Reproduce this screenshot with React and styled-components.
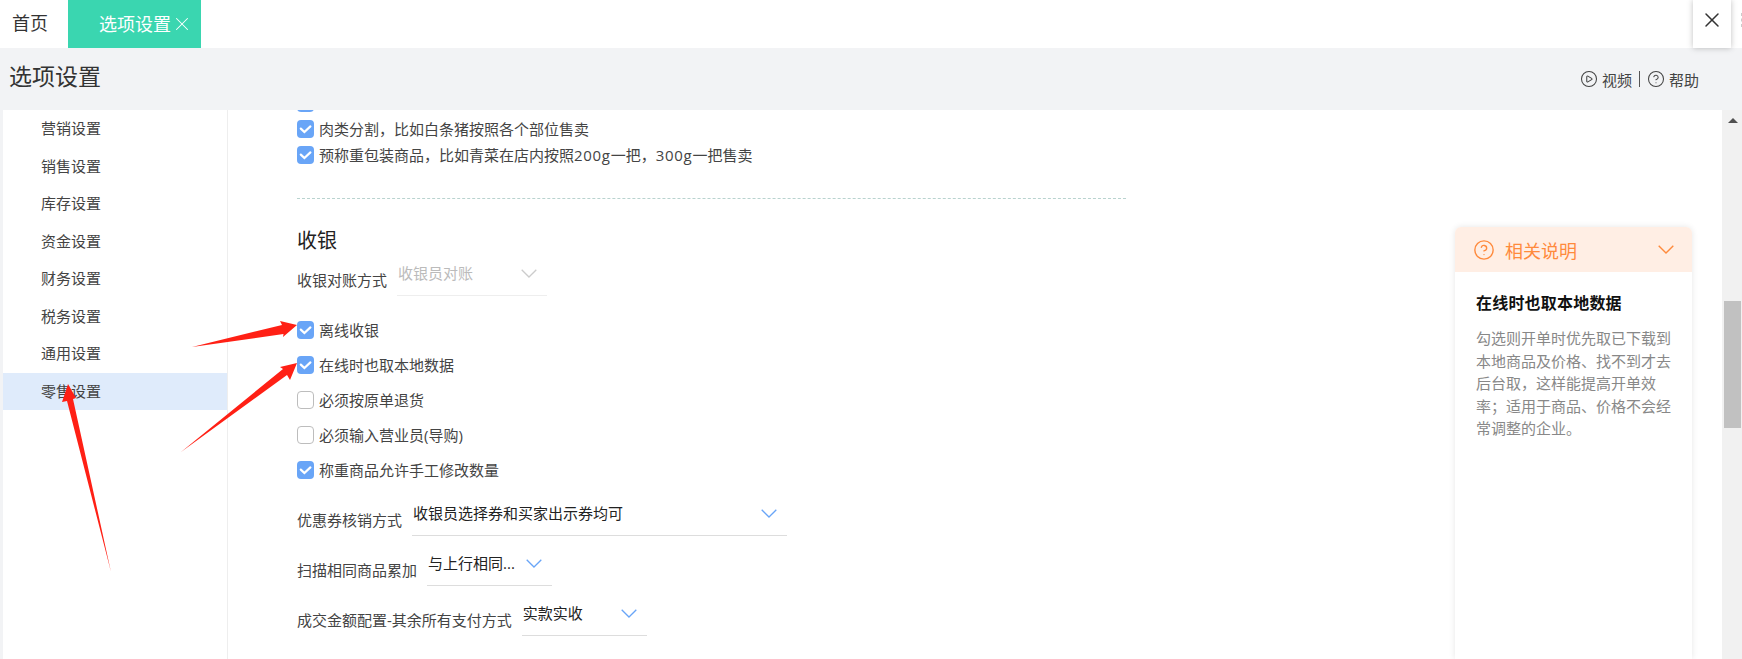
import React from 'react'
import styled, { createGlobalStyle } from 'styled-components'
import { X, CirclePlay, CircleHelp } from 'lucide-react'

const Global = createGlobalStyle`
    html, body {
        margin: 0;
        height: 659px;
        overflow: hidden;
        background: #f2f3f5;
        font-family: "Open Sans", "Noto Sans CJK SC", "Liberation Sans", sans-serif;
        color: #333;
    }
    * { box-sizing: border-box; }
`

const Page = styled.div`
    position: relative;
    width: 1742px;
    height: 659px;
    overflow: hidden;
    display: flex;
    flex-direction: column;
`

// 탭
const TabBar = styled.div`
    height: 48px;
    flex: none;
    background: #fff;
    display: flex;
    align-items: stretch;
`
const HomeTab = styled.div`
    width: 68px;
    padding-left: 12px;
    font-size: 18px;
    line-height: 46px;
`
const ActiveTab = styled.div`
    width: 133px;
    background: #3ad6b0;
    color: #fff;
    padding-left: 31px;
    font-size: 18px;
    line-height: 46px;
    display: flex;
    align-items: center;
`
const CloseBox = styled.div`
    margin-left: auto;
    margin-right: 10px;
    width: 38px;
    background: #fff;
    box-shadow: 0 0 6px rgba(0, 0, 0, 0.25);
    display: flex;
    align-items: center;
    justify-content: center;
    padding-bottom: 8px;
    color: #333;
`
const EdgeMark = styled.span`
    width: 1px;
    height: 14px;
    margin-top: 13px;
    border-left: 1px dashed #ccc;
`

const Head = styled.div`
    height: 62px;
    flex: none;
    display: flex;
    align-items: center;
    justify-content: space-between;
    padding: 0 43px 6px 9px;
`
const PageTitle = styled.h1`
    margin: 0;
    font-size: 23px;
    font-weight: 400;
    line-height: 44px;
`
const HeadLinks = styled.div`
    display: flex;
    align-items: center;
    font-size: 15px;
    color: #444;
    gap: 4px;
    margin-top: 6px;
`
const Divider = styled.span`
    width: 1px;
    height: 16px;
    background: #555;
    margin: 0 3px;
`

const Body = styled.div`
    flex: 1;
    min-height: 0;
    margin-left: 3px;
    display: flex;
    background: #fff;
`

const Side = styled.div`
    width: 225px;
    flex: none;
    border-right: 1px solid #eee;
`
const SideItem = styled.div`
    height: 37.5px;
    line-height: 36px;
    padding-left: 38px;
    font-size: 15px;
    color: #444;
    background: ${(props) => (props.active ? '#dfebfb' : 'transparent')};
`

const Main = styled.div`
    flex: 1;
    min-width: 0;
    overflow: hidden;
    padding-left: 69px;
`
const Content = styled.div`
    width: 829px;
    margin-top: -21px;
`

const CheckRow = styled.label`
    display: flex;
    align-items: center;
    gap: 5px;
    height: ${(props) => props.h || 35}px;
    padding-bottom: 2px;
    font-size: 15px;
    color: #444;
`
const Box = styled.span`
    width: 17px;
    height: 18px;
    flex: none;
    margin-top: 2px;
    border-radius: 4px;
    background: ${(props) => (props.checked ? '#69a5f7' : '#fff')};
    border: ${(props) => (props.checked ? 'none' : '1px solid #bdbdbd')};
    display: flex;
`
const Latin = styled.span`
    letter-spacing: 0.7px;
`

const Dashed = styled.div`
    border-top: 1px dashed #b9d3cf;
    margin-top: 30px;
`
const SectionTitle = styled.h2`
    margin: 26px 0 0;
    font-size: 20px;
    font-weight: 400;
    line-height: 32px;
    color: #222;
`
const ChecksGroup = styled.div`
    margin-top: 16.5px;
`

const SelectRow = styled.div`
    display: flex;
    align-items: flex-start;
    margin-top: ${(props) => props.top || 0}px;
    font-size: 15px;
    color: #444;
`
const RowLabel = styled.span`
    line-height: 22px;
    padding-top: 7px;
    margin-right: 10px;
    white-space: nowrap;
`
const Select = styled.div`
    width: ${(props) => props.w}px;
    height: 34px;
    padding-left: 1px;
    border-bottom: 1px solid ${(props) => (props.disabled ? '#eee' : '#ddd')};
    color: ${(props) => (props.disabled ? '#bbb' : '#222')};
    line-height: 22px;
    display: flex;
    justify-content: space-between;
`
const SelectText = styled.span`
    white-space: nowrap;
`
const SelectArrow = styled.svg`
    flex: none;
    color: ${(props) => (props.disabled ? '#ccc' : '#69a5f7')};
    margin: 7px 10px 0 0;
`

const Notes = styled.div`
    flex: none;
    width: 237px;
    margin: 117px 30px 0 0;
    background: #fff;
    border-radius: 6px 6px 0 0;
    box-shadow: 0 0 6px rgba(0, 0, 0, 0.1);
`
const NotesHead = styled.div`
    height: 45px;
    background: #ffeee4;
    border-radius: 6px 6px 0 0;
    color: #ff8a3c;
    display: flex;
    align-items: center;
    gap: 10px;
    padding: 0 18px;
    font-size: 18px;
`
const NotesArrow = styled.svg`
    margin-left: auto;
`
const NotesBody = styled.div`
    padding: 19px 21px 0;
`
const NotesTitle = styled.div`
    font-size: 16px;
    font-weight: 700;
    line-height: 24px;
    letter-spacing: 0.2px;
    color: #111;
`
const NotesText = styled.div`
    margin-top: 12px;
    font-size: 15px;
    line-height: 22.5px;
    color: #888;
    white-space: nowrap;
`

const ScrollTrack = styled.div`
    width: 20px;
    flex: none;
    background: #f1f1f1;
    padding: 0 1px 0 2px;
`
const ScrollUp = styled.div`
    width: 0;
    height: 0;
    margin: 8px auto 0;
    border-left: 5px solid transparent;
    border-right: 5px solid transparent;
    border-bottom: 5px solid #505050;
`
const ScrollThumb = styled.div`
    margin-top: 178px;
    height: 127px;
    background: #c1c1c1;
`

const RedArrows = styled.svg`
    position: absolute;
    left: 0;
    top: 0;
    pointer-events: none;
`

const menus = ['营销设置', '销售设置', '库存设置', '资金设置', '财务设置', '税务设置', '通用设置', '零售设置']
const noteLines = [
    '勾选则开单时优先取已下载到',
    '本地商品及价格、找不到才去',
    '后台取，这样能提高开单效',
    '率；适用于商品、价格不会经',
    '常调整的企业。',
]

function Check({ checked, children, h }) {
    return (
        <CheckRow h={h}>
            <Box checked={checked}>
                {checked && (
                    <svg width="17" height="18" viewBox="0 0 17 18" fill="none">
                        <path d="M3.8 8.6 L7.4 12 L13.4 6.4" stroke="#fff" strokeWidth="2.2" strokeLinecap="round" />
                    </svg>
                )}
            </Box>
            <span>{children}</span>
        </CheckRow>
    )
}

function Chevron({ disabled }) {
    return (
        <SelectArrow disabled={disabled} width="16" height="9" viewBox="0 0 16 9" fill="none">
            <path d="M0.7 0.7 L8 8 L15.3 0.7" stroke="currentColor" strokeWidth="1.3" />
        </SelectArrow>
    )
}

export default function App() {
    return (
        <Page>
            <Global />
            <TabBar>
                <HomeTab>首页</HomeTab>
                <ActiveTab>
                    选项设置
                    <X size={22} strokeWidth={1.1} />
                </ActiveTab>
                <CloseBox>
                    <X size={24} strokeWidth={1.5} />
                </CloseBox>
                <EdgeMark />
            </TabBar>
            <Head>
                <PageTitle>选项设置</PageTitle>
                <HeadLinks>
                    <CirclePlay size={18} strokeWidth={1.4} />
                    视频
                    <Divider />
                    <CircleHelp size={18} strokeWidth={1.4} />
                    帮助
                </HeadLinks>
            </Head>
            <Body>
                <Side>
                    {menus.map((m) => (
                        <SideItem key={m} active={m === '零售设置'}>{m}</SideItem>
                    ))}
                </Side>
                <Main>
                    <Content>
                        <Check checked h={27} />
                        <Check checked h={26}>肉类分割，比如白条猪按照各个部位售卖</Check>
                        <Check checked h={26}>
                            预称重包装商品，比如青菜在店内按照<Latin>200g</Latin>一把，<Latin>300g</Latin>一把售卖
                        </Check>
                        <Dashed />
                        <SectionTitle>收银</SectionTitle>
                        <SelectRow top={5}>
                            <RowLabel>收银对账方式</RowLabel>
                            <Select w={150} disabled>
                                <SelectText>收银员对账</SelectText>
                                <Chevron disabled />
                            </Select>
                        </SelectRow>
                        <ChecksGroup>
                            <Check checked>离线收银</Check>
                            <Check checked>在线时也取本地数据</Check>
                            <Check>必须按原单退货</Check>
                            <Check>必须输入营业员(导购)</Check>
                            <Check checked>称重商品允许手工修改数量</Check>
                        </ChecksGroup>
                        <SelectRow top={14}>
                            <RowLabel>优惠券核销方式</RowLabel>
                            <Select w={375}>
                                <SelectText>收银员选择券和买家出示券均可</SelectText>
                                <Chevron />
                            </Select>
                        </SelectRow>
                        <SelectRow top={16}>
                            <RowLabel>扫描相同商品累加</RowLabel>
                            <Select w={125}>
                                <SelectText>与上行相同...</SelectText>
                                <Chevron />
                            </Select>
                        </SelectRow>
                        <SelectRow top={16}>
                            <RowLabel>成交金额配置-其余所有支付方式</RowLabel>
                            <Select w={125}>
                                <SelectText>实款实收</SelectText>
                                <Chevron />
                            </Select>
                        </SelectRow>
                    </Content>
                </Main>
                <Notes>
                    <NotesHead>
                        <CircleHelp size={22} strokeWidth={1.5} />
                        相关说明
                        <NotesArrow width="16" height="9" viewBox="0 0 16 9" fill="none">
                            <path d="M0.7 0.7 L8 8 L15.3 0.7" stroke="currentColor" strokeWidth="1.4" />
                        </NotesArrow>
                    </NotesHead>
                    <NotesBody>
                        <NotesTitle>在线时也取本地数据</NotesTitle>
                        <NotesText>
                            {noteLines.map((line) => (
                                <div key={line}>{line}</div>
                            ))}
                        </NotesText>
                    </NotesBody>
                </Notes>
                <ScrollTrack>
                    <ScrollUp />
                    <ScrollThumb />
                </ScrollTrack>
            </Body>
            <RedArrows width="1742" height="659" viewBox="0 0 1742 659">
                <path d="M192 347 L282 325 L280 321 L297 325 L283 337 L283.5 334 Z" fill="#ff2015" />
                <path d="M181 452 L283 369 L280 367 L297 363 L290 380 L287 375 Z" fill="#ff2015" />
                <path d="M111 572 L73 399 L76 398 L68 384 L62 402 L67 401 Z" fill="#ff2015" />
            </RedArrows>
        </Page>
    )
}
